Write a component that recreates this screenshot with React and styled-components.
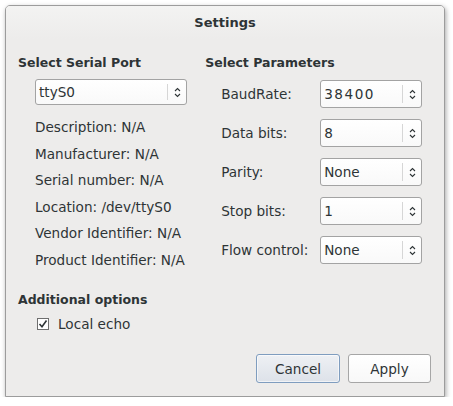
import React from "react";
import styled, { createGlobalStyle } from "styled-components";

const Global = createGlobalStyle`
  html, body { margin: 0; padding: 0; background: #ffffff; }
  body { font-family: "DejaVu Sans", "Liberation Sans", sans-serif; }
`;

const Window = styled.div`
  box-sizing: border-box;
  margin: 5px 0 0 5px;
  width: 440px;
  height: 392px;
  border: 1px solid #9c9c9c;
  border-radius: 5px 5px 0 0;
  background: #edeceb;
  box-shadow: 1px 2px 5px rgba(0, 0, 0, 0.35);
  display: flex;
  flex-direction: column;
  color: #2e3436;
  font-size: 13.6px;
`;

const TitleBar = styled.div`
  height: 33px;
  flex: none;
  display: flex;
  align-items: center;
  justify-content: center;
  font-weight: bold;
  font-size: 13px;
  border-radius: 4px 4px 0 0;
  background: linear-gradient(#f3f3f2, #edeceb);
`;

const Body = styled.div`
  flex: 1;
  display: flex;
  flex-direction: column;
  padding: 15px 13px 13px 12px;
`;

const Columns = styled.div`
  display: flex;
`;

const Column = styled.div`
  width: ${(p) => p.$width}px;
  display: flex;
  flex-direction: column;
`;

const Heading = styled.div`
  font-weight: bold;
  font-size: 12.5px;
  line-height: 18px;
`;

const Combo = styled.div`
  box-sizing: border-box;
  width: ${(p) => p.$width}px;
  height: ${(p) => p.$height}px;
  margin-left: ${(p) => p.$indent || 0}px;
  border: 1px solid #a3a3a3;
  border-radius: 3px;
  background: linear-gradient(#ffffff, #f9f9f9);
  display: flex;
  align-items: stretch;
`;

const ComboText = styled.div`
  flex: 1;
  display: flex;
  align-items: center;
  padding-left: 3px;
  letter-spacing: ${(p) => p.$spacing || 0}px;
`;

const ComboSep = styled.div`
  width: 1px;
  background: #d6d6d6;
  margin: 4px 0;
`;

const ComboArrow = styled.div`
  width: 18px;
  display: flex;
  align-items: center;
  justify-content: center;
`;

const InfoList = styled.div`
  margin: 9px 0 0 17px;
  display: flex;
  flex-direction: column;
`;

const InfoRow = styled.div`
  line-height: 26.6px;
  white-space: nowrap;
`;

const ParamList = styled.div`
  margin: 8px 0 0 16px;
  display: flex;
  flex-direction: column;
  gap: 11px;
`;

const ParamRow = styled.div`
  display: flex;
  align-items: center;
  height: 28px;
`;

const ParamLabel = styled.div`
  width: 99px;
  white-space: nowrap;
`;

const Options = styled.div`
  margin-top: 17px;
  display: flex;
  flex-direction: column;
`;

const CheckRow = styled.label`
  margin: 7px 0 0 19px;
  display: flex;
  align-items: center;
  gap: 9px;
`;

const CheckBox = styled.span`
  box-sizing: border-box;
  width: 12px;
  height: 12px;
  border: 1px solid #6e6e6e;
  background: #ffffff;
  display: flex;
  align-items: center;
  justify-content: center;
`;

const Footer = styled.div`
  margin-top: auto;
  display: flex;
  justify-content: flex-end;
  gap: 8px;
`;

const Button = styled.button`
  box-sizing: border-box;
  width: ${(p) => p.$width}px;
  height: 29px;
  font-family: inherit;
  font-size: 13.6px;
  color: #2e3436;
  border-radius: 3px;
  border: 1px solid ${(p) => (p.$focused ? "#7f9dbf" : "#a6a6a6")};
  background: ${(p) =>
    p.$focused
      ? "linear-gradient(#eef0f4, #dde2e9)"
      : "linear-gradient(#ffffff, #f8f8f8)"};
  box-shadow: ${(p) => (p.$focused ? "inset 0 0 0 1px rgba(255,255,255,0.6)" : "none")};
  padding: 0;
`;

const Arrows = () => (
  <svg width="7" height="11" viewBox="0 0 7 11">
    <path d="M1 4 L3.5 1.5 L6 4" fill="none" stroke="#2e3436" strokeWidth="1.1" />
    <path d="M1 7 L3.5 9.5 L6 7" fill="none" stroke="#2e3436" strokeWidth="1.1" />
  </svg>
);

const ComboBox = ({ value, width, height, indent, spacing }) => (
  <Combo $width={width} $height={height} $indent={indent}>
    <ComboText $spacing={spacing}>{value}</ComboText>
    <ComboSep />
    <ComboArrow>
      <Arrows />
    </ComboArrow>
  </Combo>
);

const info = [
  "Description: N/A",
  "Manufacturer: N/A",
  "Serial number: N/A",
  "Location: /dev/ttyS0",
  "Vendor Identifier: N/A",
  "Product Identifier: N/A",
];

const params = [
  ["BaudRate:", "38400", 1.5],
  ["Data bits:", "8"],
  ["Parity:", "None"],
  ["Stop bits:", "1"],
  ["Flow control:", "None"],
];

export default function App() {
  return (
    <>
      <Global />
      <Window>
        <TitleBar>Settings</TitleBar>
        <Body>
          <Columns>
            <Column $width={189}>
              <Heading>Select Serial Port</Heading>
              <div style={{ height: 7 }} />
              <ComboBox value="ttyS0" width={152} height={26} indent={17} />
              <InfoList>
                {info.map((t) => (
                  <InfoRow key={t}>{t}</InfoRow>
                ))}
              </InfoList>
            </Column>
            <Column $width={228}>
              <Heading>Select Parameters</Heading>
              <ParamList>
                {params.map(([l, v, s]) => (
                  <ParamRow key={l}>
                    <ParamLabel>{l}</ParamLabel>
                    <ComboBox value={v} width={102} height={28} spacing={s} />
                  </ParamRow>
                ))}
              </ParamList>
            </Column>
          </Columns>
          <Options>
            <Heading>Additional options</Heading>
            <CheckRow>
              <CheckBox>
                <svg width="10" height="10" viewBox="0 0 10 10">
                  <path d="M1.5 5 L4 7.8 L8.5 1.5" fill="none" stroke="#2e3436" strokeWidth="1.6" />
                </svg>
              </CheckBox>
              Local echo
            </CheckRow>
          </Options>
          <Footer>
            <Button $width={84} $focused>Cancel</Button>
            <Button $width={83}>Apply</Button>
          </Footer>
        </Body>
      </Window>
    </>
  );
}
